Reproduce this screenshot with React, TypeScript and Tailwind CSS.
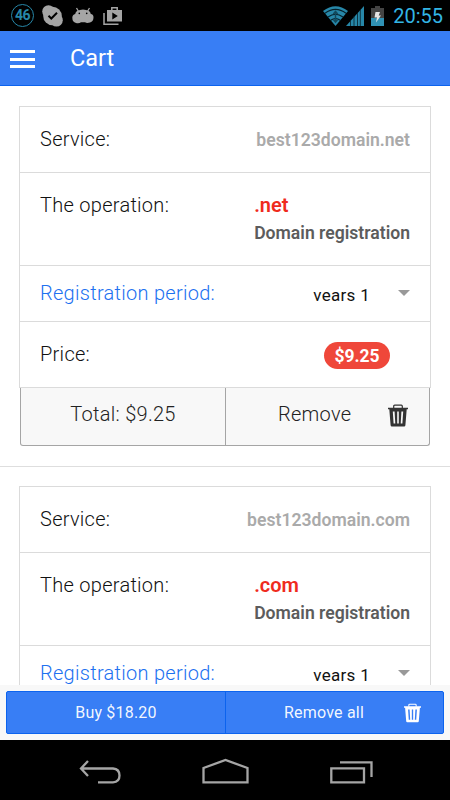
type Item = { id: number; domain: string; zone: string; price?: string };

const items: Item[] = [
  { id: 1, domain: 'best123domain.net', zone: '.net', price: '$9.25' },
  { id: 2, domain: 'best123domain.com', zone: '.com' },
];

const TrashIcon = ({ className }: { className: string }) => (
  <svg viewBox="0 0 20 23" className={className} fill="none">
    <path d="M5.7 4V2.2Q5.7 1.2 6.7 1.2H13.3Q14.300 1.200 14.300 2.200V4" stroke="currentColor" strokeWidth="1.2" />
    <path
      fill="currentColor"
      fillRule="evenodd"
      d="M0 3.700H20V5.200H18.700L17.400 21.300Q17.200 22.500 16.200 22.500H3.800Q2.800 22.500 2.600 21.300L1.300 5.200H0ZM4.800 7.500L5.600 19.500H7.300L6.600 7.500ZM9.200 7.500V19.500H10.800V7.500ZM13.400 7.500L12.700 19.500H14.400L15.200 7.500Z"
    />
  </svg>
);

const StatusBar = () => (
  <div className="h-[31px] shrink-0 bg-black flex items-center justify-between pl-[11px] pr-[7px]">
    <div className="flex items-center text-[#a5a5a5]">
      <div className="w-[23px] h-[23px] rounded-full border-[1.5px] border-[#2787a8] text-[#2787a8] text-[14px] font-bold tracking-[-0.5px] flex items-center justify-center">
        46
      </div>
      <svg className="w-[21px] h-[22px] ml-2" viewBox="0 0 21 22">
        <circle cx="6.500" cy="6.500" r="6.300" fill="currentColor" />
        <circle cx="14.500" cy="15.300" r="6.300" fill="currentColor" />
        <circle cx="10.500" cy="11" r="9.300" fill="currentColor" />
        <path d="M6.500 10.800L9.300 13.500L15 7.800" fill="none" stroke="#000" strokeWidth="2" />
      </svg>
      <svg className="w-[22px] h-[17px] ml-[9px]" viewBox="0 0 22 17">
        <path d="M4.500 1L6.600 4.500M17.500 1L15.400 4.500" stroke="currentColor" strokeWidth="1.300" />
        <path
          fill="currentColor"
          d="M5 4Q11 .8 17 4Q18.500 5 18.800 7Q21.500 7.300 21.500 10.200Q21.500 14.500 18 15.500Q15 16.500 13 15.300H9Q7 16.800 4 16Q.3 15 .3 10.500Q.5 7.500 3.200 7Q3.500 5 5 4Z"
        />
        <circle cx="7.300" cy="6.400" r=".8" fill="#000" />
        <circle cx="14.700" cy="6.400" r=".8" fill="#000" />
      </svg>
      <svg className="w-[20px] h-[20px] ml-[9px]" viewBox="0 0 20 20">
        <path d="M1 7V18.300H15.500" fill="none" stroke="currentColor" strokeWidth="1.500" />
        <path d="M8.800 4V1.800H14.200V4" fill="none" stroke="currentColor" strokeWidth="1.500" />
        <path fillRule="evenodd" fill="currentColor" d="M4 4H19V15.500H4ZM9.300 6.500V13.500L14.800 10Z" />
      </svg>
    </div>
    <div className="flex items-center">
      <svg className="w-[25px] h-[20px] mr-[-2px]" viewBox="0 0 25 20">
        <path d="M0 5Q12.500 -4.500 25 5L12.500 20Z" fill="#2787a8" />
        <path
          d="M2 7.300Q12.500 -.5 23 7.300M5 11Q12.500 5.500 20 11M7.800 14.300Q12.500 10.700 17.200 14.300"
          fill="none"
          stroke="#06202a"
          strokeWidth="1.1"
        />
        <path
          d="M12.500 5V16M10.300 13.500L12.500 16L14.700 13.500M10.300 8L12.500 5.500L14.700 8"
          fill="none"
          stroke="#12495c"
          strokeWidth="1.5"
        />
      </svg>
      <svg className="w-[18px] h-[20px] mr-[7px]" viewBox="0 0 18 20">
        <path d="M0 20L18 0V20Z" fill="#2787a8" />
        <path d="M4.500 14V20M8 10V20M11.500 7V20M14.300 4V20" stroke="#06202a" strokeWidth=".8" />
      </svg>
      <svg className="w-[13px] h-[20px] mr-[9px]" viewBox="0 0 13 20">
        <path d="M0 2H4V0H9V2H13V12H0Z" fill="#444" />
        <path d="M0 12H13V20H0Z" fill="#3092b5" />
        <path d="M4.500 6H9L7.700 9.500H10L5 16.500L6 11.500H3.500Z" fill="#e5e5e5" />
      </svg>
      <span className="text-[20px] leading-[31px] pt-[1px] text-[#33b5e5]">20:55</span>
    </div>
  </div>
);

const Header = () => (
  <header className="h-[55px] shrink-0 bg-[#387ef5] border-b border-[#0c63ee] flex items-center pl-[10px]">
    <div className="w-[25px] h-[20px] pt-[2px] flex flex-col justify-between">
      <div className="h-[3px] bg-white" />
      <div className="h-[3px] bg-white" />
      <div className="h-[3px] bg-white" />
    </div>
    <h1 className="ml-[35px] pt-[2px] text-[23.5px] text-white">Cart</h1>
  </header>
);

const CartItem = ({ item }: { item: Item }) => (
  <div className="h-[380px] shrink-0 border-b border-[#dedede] px-[19px] pt-[19px]">
    <div className="border border-[#dbdbdb] text-[20px] leading-[24px] font-[350] tracking-[0.28px] text-[#111]">
      <div className="h-[66px] border-b border-[#dbdbdb] px-[20px] pt-[20px] flex justify-between">
        <span>Service:</span>
        <span className="mt-[1px] text-[17.6px] tracking-normal font-semibold text-[#aaa]">{item.domain}</span>
      </div>
      <div className="h-[93px] border-b border-[#dbdbdb] px-[20px] pt-[20px] flex justify-between">
        <span>The operation:</span>
        <div className="font-semibold tracking-normal">
          <div className="text-[#ef2b1d]">{item.zone}</div>
          <div className="mt-[4px] text-[17.6px] text-[#5c5c5c]">Domain registration</div>
        </div>
      </div>
      <div className="h-[56px] border-b border-[#dbdbdb] px-[20px] pt-[15px] flex">
        <span className="text-[#2070f0]">Registration period:</span>
        <span className="ml-auto mt-[2px] text-[17px] font-normal">vears 1</span>
        <div className="ml-[28px] mt-[9px] w-0 h-0 border-x-[6px] border-t-[6px] border-x-transparent border-t-[#999]" />
      </div>
      {item.price && (
        <div className="h-[65px] pl-[20px] pr-[40px] pt-[20px] flex justify-between">
          <span>Price:</span>
          <span className="h-[27px] w-[66px] rounded-full bg-[#ef473a] text-white text-[17.5px] tracking-normal leading-[28px] font-bold text-center">
            {item.price}
          </span>
        </div>
      )}
    </div>
    {item.price && (
      <div className="h-[58px] mx-[1px] border border-t-0 border-[#a5a5a5] rounded-b-[3px] bg-[#f8f8f8] flex text-[20px] leading-[24px] font-[350] tracking-[0.28px] text-[#222]">
        <div className="w-[205px] border-r border-[#a5a5a5] pt-[14px] text-center">Total: {item.price}</div>
        <div className="flex-1 flex pl-[52px] pt-[14px]">
          <span>Remove</span>
          <TrashIcon className="w-[20px] h-[23px] ml-auto mr-[21px] mt-[2px] text-[#333]" />
        </div>
      </div>
    )}
  </div>
);

const BuyBar = () => (
  <div className="h-[55px] shrink-0 bg-[#f8f8f8] px-[6px] pt-[6px]">
    <div className="h-[43px] border border-[#0c63ee] rounded-[2px] bg-[#387ef5] flex text-[16px] leading-[41px] tracking-[0.2px] text-white/95">
      <div className="w-[219px] border-r border-[#0c63ee] text-center">Buy $18.20</div>
      <div className="flex-1 flex items-center pl-[58px] pr-[22px] justify-between">
        <span>Remove all</span>
        <TrashIcon className="w-[17px] h-[20px] text-white" />
      </div>
    </div>
  </div>
);

const NavBar = () => (
  <div className="h-[60px] shrink-0 bg-black flex items-center justify-between pt-[3px] pl-[79px] pr-[77px]">
    <svg className="w-[42px] h-[24px]" viewBox="0 0 42 24" fill="none" stroke="#a5a5a5" strokeWidth="2.300">
      <path d="M9 1L2 8.500L9 16M2 8.500H34Q40.500 9 40.500 15.500Q40.500 22 34 22.300H19" />
    </svg>
    <svg className="w-[47px] h-[27px] -mt-[3px]" viewBox="0 0 47 27" fill="none" stroke="#a5a5a5" strokeWidth="2.300">
      <path d="M1.500 25.300V11L23.500 3L45.500 11V25.300Z" />
    </svg>
    <svg className="w-[43px] h-[24px]" viewBox="0 0 43 24" fill="none" stroke="#a5a5a5" strokeWidth="2.300">
      <path d="M1.300 8.300H34V22.300H1.300ZM10 2.300H41.500V17" />
    </svg>
  </div>
);

export default function App() {
  return (
    <div className="w-[450px] h-[800px] overflow-hidden bg-white flex flex-col font-['Roboto',sans-serif]">
      <StatusBar />
      <Header />
      <main className="flex-1 min-h-0 pt-[1px] overflow-hidden flex flex-col">
        {items.map((item) => (
          <CartItem key={item.id} item={item} />
        ))}
      </main>
      <BuyBar />
      <NavBar />
    </div>
  );
}
